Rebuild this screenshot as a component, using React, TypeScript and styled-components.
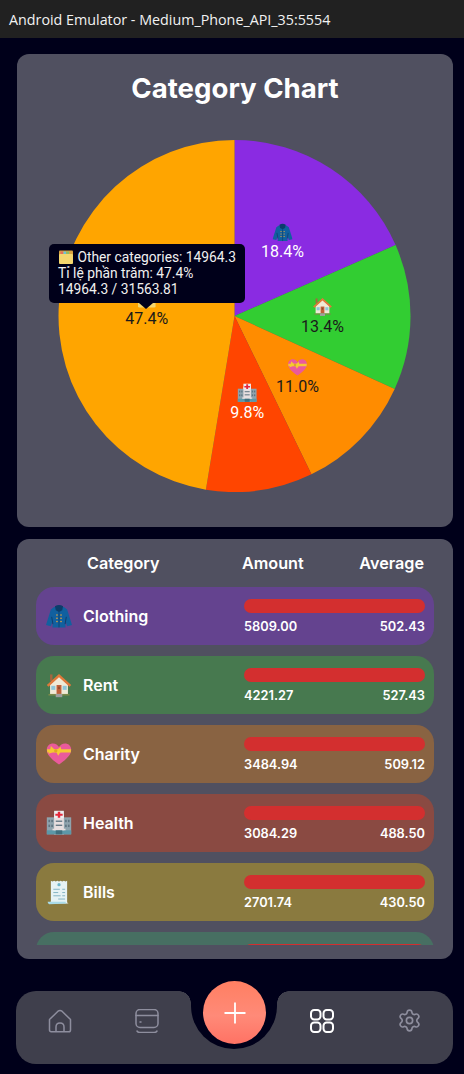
import React from 'react';
import styled, { createGlobalStyle } from 'styled-components';
import { Settings } from 'lucide-react';

const PAGE_BG = '#00001a';
const PANEL = '#505060';

const GlobalStyle = createGlobalStyle`
  html, body {
    margin: 0;
    padding: 0;
    background: ${PAGE_BG};
  }
  * {
    box-sizing: border-box;
  }
`;

type EmojiProps = { size?: number; x?: number; y?: number };

const CoatEmoji: React.FC<EmojiProps> = ({ size = 26, x, y }) => (
  <svg width={size} height={size} x={x} y={y} viewBox="0 0 32 32">
    <path d="M10 5 L22 5 L26 8 L32 27 L26 28.5 L23.5 21 L24 30 L8 30 L8.5 21 L6 28.5 L0 27 L6 8 Z" fill="#11609f" />
    <path d="M11 4 Q16 1 21 4 L20 9 L16 11 L12 9 Z" fill="#0b3d6b" />
    <path d="M16 11 L16 30" stroke="#0b3d6b" strokeWidth="1" />
    <path d="M7 17 L8.5 26 M25 17 L23.5 26" stroke="#0b3d6b" strokeWidth="1.2" />
    <g fill="#c79a4b">
      <rect x="12.5" y="14" width="2" height="1.6" />
      <rect x="17.5" y="14" width="2" height="1.6" />
      <rect x="12.5" y="18" width="2" height="1.6" />
      <rect x="17.5" y="18" width="2" height="1.6" />
      <rect x="12.5" y="22" width="2" height="1.6" />
      <rect x="17.5" y="22" width="2" height="1.6" />
    </g>
  </svg>
);

const HouseEmoji: React.FC<EmojiProps> = ({ size = 26, x, y }) => (
  <svg width={size} height={size} x={x} y={y} viewBox="0 0 32 32">
    <rect x="5" y="3" width="3" height="8" fill="#a5673f" />
    <path d="M5 15 L16 5 L27 15 L27 27 L5 27 Z" fill="#f0ead6" />
    <path d="M1 16 L16 2.5 L31 16 L29 18 L16 6.5 L3 18 Z" fill="#e0793a" />
    <rect x="13" y="16" width="6" height="11" fill="#c0603a" />
    <rect x="15" y="18" width="2" height="3" fill="#8c4a2c" />
    <rect x="6.5" y="17" width="5" height="5" fill="#8fc6d8" />
    <rect x="20.5" y="17" width="5" height="5" fill="#8fc6d8" />
    <rect x="3" y="27" width="26" height="2" fill="#7c8a4a" />
    <rect x="12" y="27" width="8" height="4" fill="#9e9e9e" />
  </svg>
);

const HeartEmoji: React.FC<EmojiProps> = ({ size = 26, x, y }) => (
  <svg width={size} height={size} x={x} y={y} viewBox="0 0 32 32">
    <path d="M16 29 C6 22 1 17 1 10.5 C1 5.5 5 3 8.5 3 C12 3 14.5 5 16 7.5 C17.5 5 20 3 23.5 3 C27 3 31 5.5 31 10.5 C31 17 26 22 16 29 Z" fill="#ea5a9b" />
    <path d="M1.2 10 L30.8 10 L30.5 14 L1.6 14 Z" fill="#f6c832" />
    <path d="M12 12 L6 6 L5 11 L3 16 Z M12 12 L18 7 L19 12 L15 18 Z" fill="#f6c832" />
    <circle cx="12" cy="12" r="2" fill="#e0a820" />
  </svg>
);

const HospitalEmoji: React.FC<EmojiProps> = ({ size = 26, x, y }) => (
  <svg width={size} height={size} x={x} y={y} viewBox="0 0 32 32">
    <rect x="1" y="9" width="30" height="21" fill="#8fa3ad" />
    <rect x="10" y="6" width="12" height="24" fill="#e8dfe0" />
    <rect x="10" y="1" width="12" height="9" fill="#eceff1" />
    <path d="M14.5 2 H17.5 V4.5 H20.5 V7 H17.5 V9.5 H14.5 V7 H11.5 V4.5 H14.5 Z" fill="#e5283c" />
    <g fill="#5f7480">
      <rect x="3" y="12" width="2" height="3" />
      <rect x="6.5" y="12" width="2" height="3" />
      <rect x="23.5" y="12" width="2" height="3" />
      <rect x="27" y="12" width="2" height="3" />
      <rect x="3" y="18" width="2" height="3" />
      <rect x="6.5" y="18" width="2" height="3" />
      <rect x="23.5" y="18" width="2" height="3" />
      <rect x="27" y="18" width="2" height="3" />
      <rect x="12" y="13" width="8" height="1.6" />
      <rect x="12" y="18" width="8" height="1.6" />
    </g>
    <rect x="1" y="25" width="30" height="5" fill="#5c98a8" />
    <rect x="8" y="23" width="16" height="2" fill="#e8dfe0" />
    <rect x="12" y="25" width="8" height="5" fill="#3f6f7e" />
  </svg>
);

const ReceiptEmoji: React.FC<EmojiProps> = ({ size = 26, x, y }) => (
  <svg width={size} height={size} x={x} y={y} viewBox="0 0 32 32">
    <path d="M6 2 L8 3 L10 2 L12 3 L14 2 L16 3 L18 2 L20 3 L22 2 L24 3 L26 2 L26 28 Q26 30 28 30 L4 30 Q6 29 6 27 Z" fill="#e6f2f4" />
    <path d="M2 28 L24 28 Q24 30 26 30 L4 31 Q2 30 2 28 Z" fill="#a9dbe8" />
    <circle cx="16" cy="7" r="2" fill="#6db5c9" />
    <g fill="#8ab8c6">
      <rect x="9" y="12" width="8" height="1.3" />
      <rect x="9" y="16" width="6" height="1.3" />
      <rect x="9" y="20" width="9" height="1.3" />
      <rect x="20" y="12" width="3.5" height="1.3" />
      <rect x="20" y="16" width="3.5" height="1.3" />
      <rect x="20" y="20" width="3.5" height="1.3" />
      <rect x="15" y="24" width="8.5" height="1.3" />
    </g>
  </svg>
);

const FolderEmoji: React.FC<EmojiProps> = ({ size = 16, x, y }) => (
  <svg width={size} height={size} x={x} y={y} viewBox="0 0 32 32">
    <rect x="2" y="3" width="28" height="10" rx="2" fill="#d9a441" />
    <rect x="5" y="5" width="5" height="6" fill="#e56b5d" />
    <rect x="11" y="5" width="5" height="6" fill="#6fc3d8" />
    <rect x="17" y="5" width="5" height="6" fill="#86c06c" />
    <rect x="2" y="10" width="28" height="20" rx="2" fill="#f5d76e" />
  </svg>
);

type Slice = {
  share: number;
  color: string;
  labelColor: string;
  Emoji: React.FC<EmojiProps>;
};

const slices: Slice[] = [
  { share: 18.4, color: '#8a2be2', labelColor: '#ffffff', Emoji: CoatEmoji },
  { share: 13.4, color: '#32cd32', labelColor: '#1a1a1a', Emoji: HouseEmoji },
  { share: 11.0, color: '#ff8c00', labelColor: '#1a1a1a', Emoji: HeartEmoji },
  { share: 9.8, color: '#ff4500', labelColor: '#ffffff', Emoji: HospitalEmoji },
  { share: 47.4, color: '#ffa500', labelColor: '#1a1a1a', Emoji: FolderEmoji },
];

const rows = [
  { name: 'Clothing', amount: '5809.00', average: '502.43', bg: '#64438f', Emoji: CoatEmoji },
  { name: 'Rent', amount: '4221.27', average: '527.43', bg: '#47794f', Emoji: HouseEmoji },
  { name: 'Charity', amount: '3484.94', average: '509.12', bg: '#896342', Emoji: HeartEmoji },
  { name: 'Health', amount: '3084.29', average: '488.50', bg: '#8a4a42', Emoji: HospitalEmoji },
  { name: 'Bills', amount: '2701.74', average: '430.50', bg: '#8a7a3f', Emoji: ReceiptEmoji },
];

const CX = 217.5;
const CY = 176;
const R = 176;

const polar = (pct: number, r: number) => {
  const a = (pct / 100) * Math.PI * 2;
  return { x: CX + r * Math.sin(a), y: CY - r * Math.cos(a) };
};

const PieChart: React.FC = () => {
  let start = 0;
  return (
    <PieSvg viewBox="0 0 436 352">
      {slices.map((s) => {
        const from = polar(start, R);
        const to = polar(start + s.share, R);
        const mid = polar(start + s.share / 2, 88);
        const large = s.share > 50 ? 1 : 0;
        start += s.share;
        return (
          <g key={s.color}>
            <path d={`M${CX} ${CY} L${from.x} ${from.y} A${R} ${R} 0 ${large} 1 ${to.x} ${to.y} Z`} fill={s.color} />
            <s.Emoji size={20} x={mid.x - 10} y={mid.y - 20} />
            <PieLabel x={mid.x} y={mid.y + 15} fill={s.labelColor}>
              {s.share.toFixed(1)}%
            </PieLabel>
          </g>
        );
      })}
    </PieSvg>
  );
};

const App: React.FC = () => {
  return (
    <Page>
      <GlobalStyle />
      <TitleBar>Android Emulator - Medium_Phone_API_35:5554</TitleBar>
      <Main>
        <ChartCard>
          <ChartTitle>Category Chart</ChartTitle>
          <ChartArea>
            <PieChart />
            <Tooltip>
              <TooltipLine>
                <FolderEmoji size={16} /> Other categories: 14964.3
              </TooltipLine>
              <TooltipLine>Tỉ lệ phần trăm: 47.4%</TooltipLine>
              <TooltipLine>14964.3 / 31563.81</TooltipLine>
            </Tooltip>
          </ChartArea>
        </ChartCard>

        <TableCard>
          <TableHeader>
            <HeaderCategory>Category</HeaderCategory>
            <HeaderValues>
              <span>Amount</span>
              <span>Average</span>
            </HeaderValues>
          </TableHeader>
          <RowList>
            {rows.map((r) => (
              <Row key={r.name} $bg={r.bg}>
                <r.Emoji size={26} />
                <RowName>{r.name}</RowName>
                <RowStats>
                  <Bar />
                  <StatValues>
                    <span>{r.amount}</span>
                    <span>{r.average}</span>
                  </StatValues>
                </RowStats>
              </Row>
            ))}
            {/* next row is scrolled almost out of view, only its top edge and bar show */}
            <Row $bg="#476f62">
              <RowName />
              <RowStats>
                <Bar />
              </RowStats>
            </Row>
          </RowList>
        </TableCard>
      </Main>

      <BottomNav>
        <NavItem $active={false}>
          <svg width="24" height="24" viewBox="0 0 24 24" fill="none" stroke="currentColor" strokeWidth="1.5" strokeLinejoin="round">
            <path d="M1.5 10.5 L10 2.2 Q12 0.8 14 2.2 L22.5 10.5 L22.5 21 Q22.5 22.8 20.8 22.8 L3.2 22.8 Q1.5 22.8 1.5 21 Z" />
            <path d="M8 22.8 L8 18 Q8 14 12 14 Q16 14 16 18 L16 22.8" />
          </svg>
        </NavItem>
        <NavItem $active={false}>
          <svg width="24" height="24" viewBox="0 0 24 24" fill="none" stroke="currentColor" strokeWidth="1.5" strokeLinecap="round">
            <rect x="1" y="0.5" width="22" height="18" rx="4" />
            <path d="M1 6.5 H23" />
            <path d="M5 13 H6" />
            <path d="M2 22 Q3 23.5 5 23.5 H19 Q21 23.5 22 22" />
          </svg>
        </NavItem>
        <span />
        <NavItem $active>
          <svg width="24" height="24" viewBox="0 0 24 24" fill="none" stroke="currentColor" strokeWidth="2">
            <rect x="1" y="1" width="9.5" height="9.5" rx="3.2" />
            <rect x="13.5" y="1" width="9.5" height="9.5" rx="3.2" />
            <rect x="1" y="13.5" width="9.5" height="9.5" rx="3.2" />
            <rect x="13.5" y="13.5" width="9.5" height="9.5" rx="3.2" />
          </svg>
        </NavItem>
        <NavItem $active={false}>
          <Settings size={25} strokeWidth={1.6} />
        </NavItem>
        <Notch />
        <Fab>
          <svg width="24" height="24" viewBox="0 0 24 24" fill="none" stroke="#ffffff" strokeWidth="1.8">
            <path d="M12 1.5 V22.5 M1.5 12 H22.5" />
          </svg>
        </Fab>
      </BottomNav>
    </Page>
  );
};

const Page = styled.div`
  width: 464px;
  height: 1074px;
  overflow: hidden;
  display: flex;
  flex-direction: column;
  background: ${PAGE_BG};
`;

const TitleBar = styled.div`
  height: 38px;
  flex: none;
  padding-left: 9px;
  display: flex;
  align-items: center;
  background: #212121;
  color: #f2f2f2;
  font-family: 'Open Sans', sans-serif;
  font-size: 14.3px;
`;

const Main = styled.main`
  padding: 16px 11px 0 17px;
  display: flex;
  flex-direction: column;
  gap: 12px;
`;

const ChartCard = styled.section`
  height: 473px;
  background: ${PANEL};
  border-radius: 12px;
  padding-top: 15px;
`;

const ChartTitle = styled.h1`
  margin: 0 0 33px;
  height: 38px;
  line-height: 38px;
  text-align: center;
  color: #ffffff;
  font-family: Inter, sans-serif;
  font-size: 27.6px;
  font-weight: 700;
`;

const ChartArea = styled.div`
  position: relative;
`;

const PieSvg = styled.svg`
  display: block;
  width: 436px;
  height: 352px;
`;

const PieLabel = styled.text`
  font-family: Roboto, sans-serif;
  font-size: 16px;
  text-anchor: middle;
`;

const Tooltip = styled.div`
  position: absolute;
  left: 32px;
  top: 104px;
  width: 196px;
  height: 59px;
  padding: 5px 9px;
  background: ${PAGE_BG};
  border-radius: 5px;
  color: #f0f0f0;
  font-family: Roboto, sans-serif;
  font-size: 13.8px;
  line-height: 16px;

  &::after {
    content: '';
    position: absolute;
    left: 90px;
    bottom: -6px;
    border-left: 7px solid transparent;
    border-right: 7px solid transparent;
    border-top: 6px solid ${PAGE_BG};
  }
`;

const TooltipLine = styled.div`
  white-space: nowrap;

  svg {
    vertical-align: -3px;
  }
`;

const TableCard = styled.section`
  height: 420px;
  background: ${PANEL};
  border-radius: 12px;
  padding: 15px 19px 0;
`;

const TableHeader = styled.div`
  display: flex;
  align-items: center;
  height: 18px;
  margin-bottom: 15px;
  color: #ffffff;
  font-family: Inter, sans-serif;
  font-size: 16.2px;
  font-weight: 600;
`;

const HeaderCategory = styled.div`
  width: 206px;
  padding-left: 51px;
`;

const HeaderValues = styled.div`
  width: 182px;
  display: flex;
  justify-content: space-between;
`;

const RowList = styled.div`
  height: 358px;
  overflow: hidden;
  display: flex;
  flex-direction: column;
  gap: 11.5px;
`;

const Row = styled.div<{ $bg: string }>`
  flex: none;
  height: 57.5px;
  display: flex;
  align-items: center;
  padding: 0 9px 0 10px;
  border-radius: 18px;
  background: ${(p) => p.$bg};
`;

const RowName = styled.div`
  flex: 1;
  margin-left: 11px;
  color: #ffffff;
  font-family: Inter, sans-serif;
  font-size: 16px;
  font-weight: 600;
`;

const RowStats = styled.div`
  width: 181px;
  align-self: flex-start;
  padding-top: 12px;
  display: flex;
  flex-direction: column;
  gap: 5px;
`;

const Bar = styled.div`
  height: 14px;
  border-radius: 7px;
  background: #d32f2f;
`;

const StatValues = styled.div`
  display: flex;
  justify-content: space-between;
  margin-top: 1px;
  color: #ffffff;
  font-family: Inter, sans-serif;
  font-size: 12.8px;
  font-weight: 600;
  line-height: 15px;
`;

const BottomNav = styled.nav`
  position: relative;
  margin: 32px 0 0 16px;
  width: 437px;
  height: 73px;
  padding-bottom: 14px;
  display: grid;
  grid-template-columns: repeat(5, 1fr);
  align-items: center;
  justify-items: center;
  background: #3f3f4c;
  border-radius: 20px;
`;

const NavItem = styled.div<{ $active: boolean }>`
  display: flex;
  color: ${(p) => (p.$active ? '#ffffff' : '#8e8e9e')};
`;

const Notch = styled.div`
  position: absolute;
  left: 175px;
  top: 0;
  width: 86px;
  height: 58px;
  background: ${PAGE_BG};
  border-radius: 0 0 43px 43px;

  &::before,
  &::after {
    content: '';
    position: absolute;
    top: 0;
    width: 12px;
    height: 12px;
  }

  &::before {
    left: -12px;
    background: radial-gradient(circle at 0 100%, transparent 11.5px, ${PAGE_BG} 12px);
  }

  &::after {
    right: -12px;
    background: radial-gradient(circle at 100% 100%, transparent 11.5px, ${PAGE_BG} 12px);
  }
`;

const Fab = styled.div`
  position: absolute;
  left: 187px;
  top: -10px;
  width: 63px;
  height: 63px;
  display: flex;
  align-items: center;
  justify-content: center;
  border-radius: 50%;
  background: linear-gradient(180deg, #ff7f62 0%, #ff8a78 55%, #ff7264 100%);
`;

export default App;
